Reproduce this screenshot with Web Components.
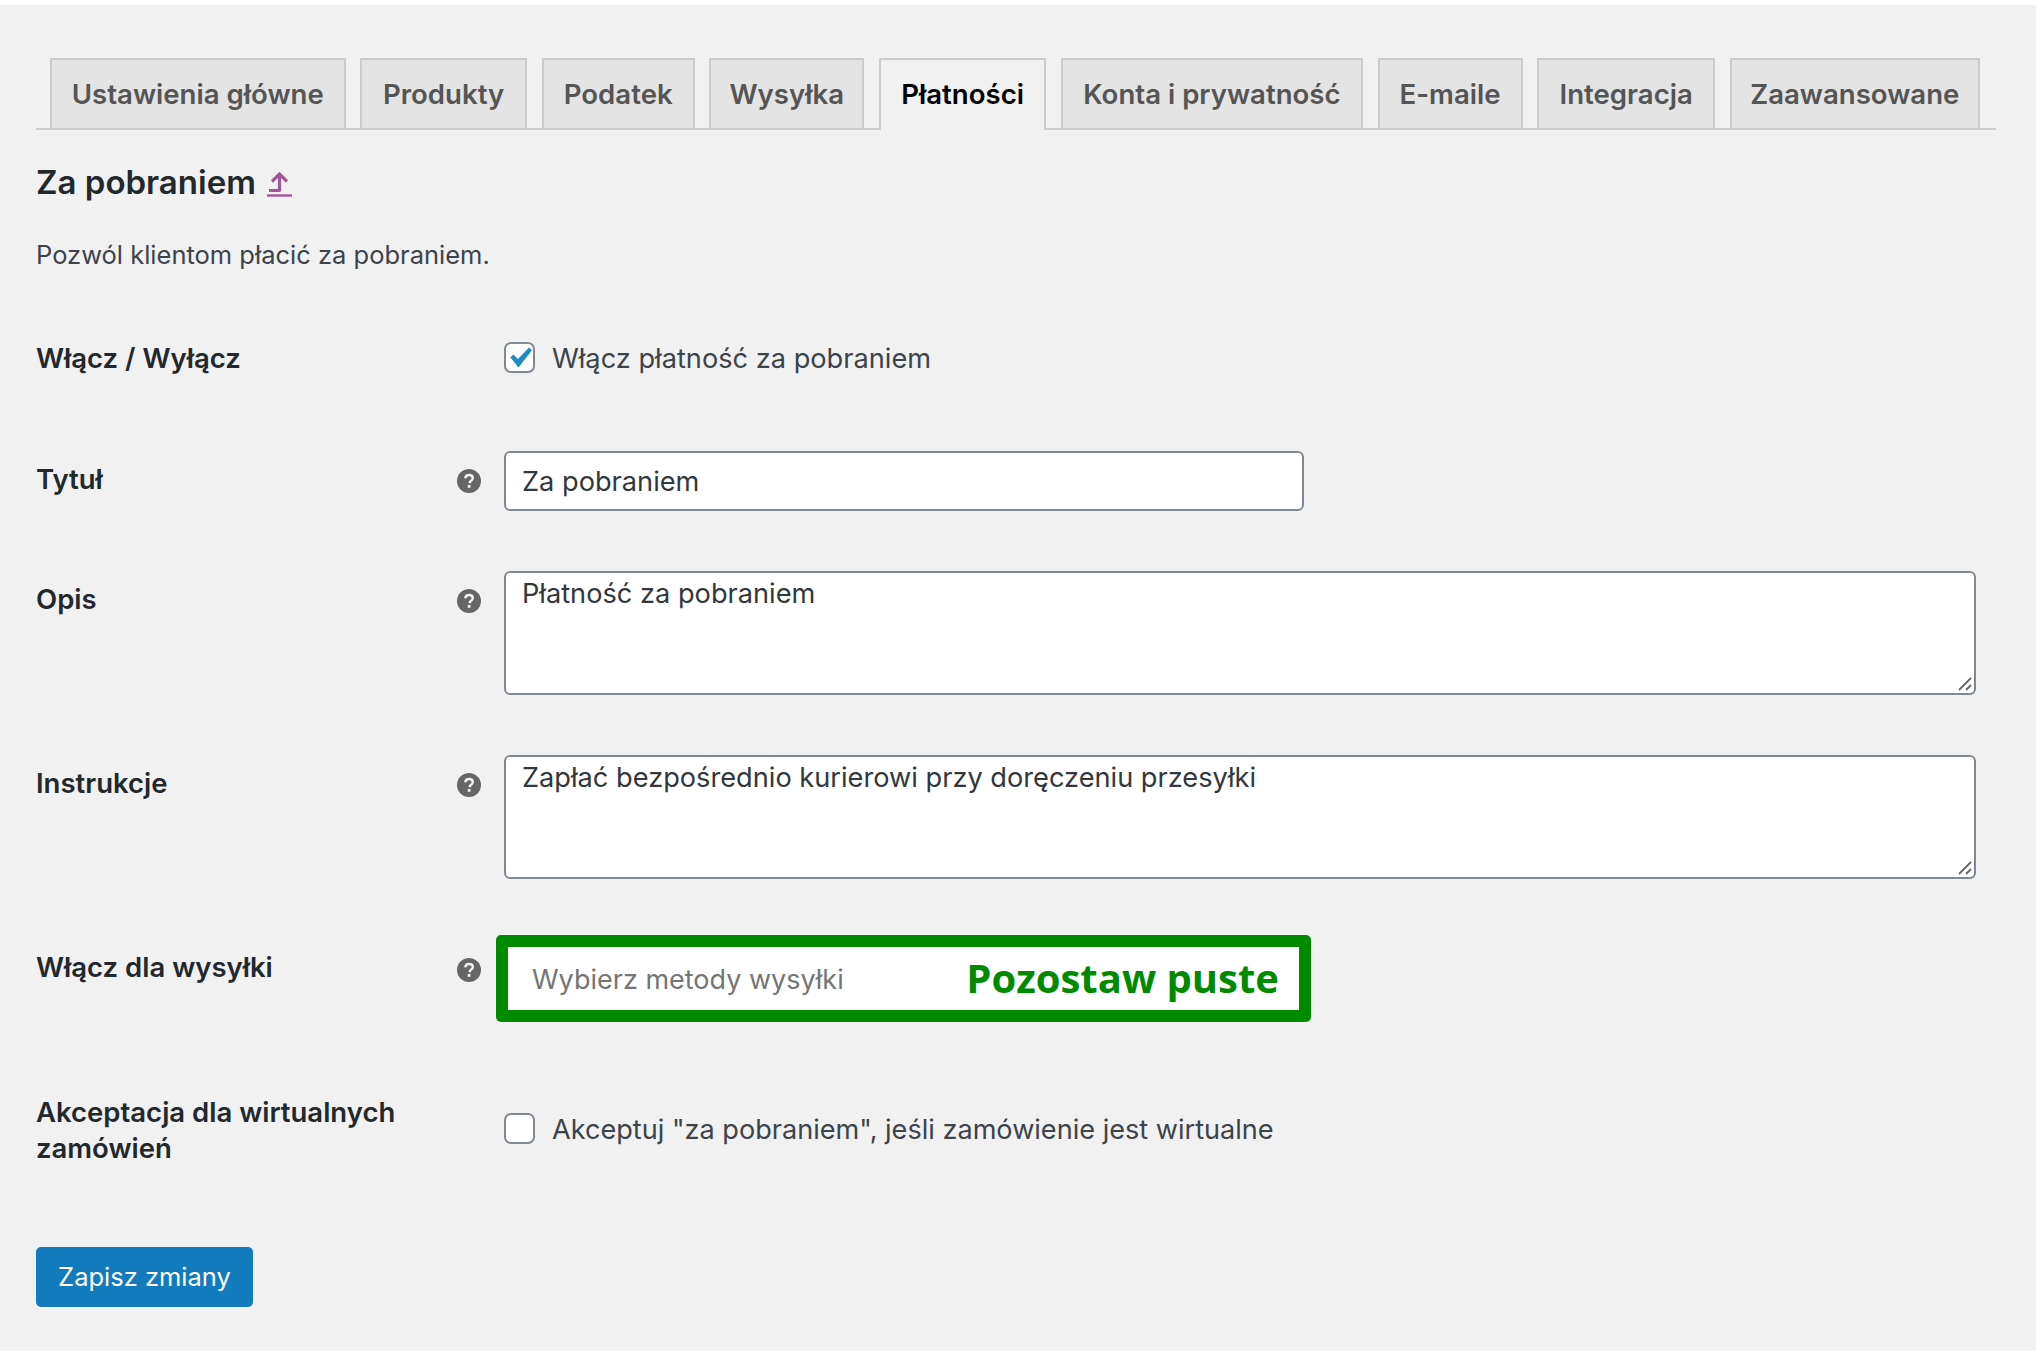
<!DOCTYPE html>
<html lang="pl">
<head>
<meta charset="utf-8">
<title>Za pobraniem</title>
<style>
  html, body { margin: 0; background: #fff; }
  body { height: 1351px; overflow: hidden; font-family: Inter, "Liberation Sans", sans-serif; }
</style>
</head>
<body>
<wc-page>
  <wc-tabs>
    <wc-tab style="width:295.5px">Ustawienia główne</wc-tab>
    <wc-tab style="width:167px">Produkty</wc-tab>
    <wc-tab style="width:153px">Podatek</wc-tab>
    <wc-tab style="width:155px">Wysyłka</wc-tab>
    <wc-tab style="width:167.5px" active>Płatności</wc-tab>
    <wc-tab style="width:302px">Konta i prywatność</wc-tab>
    <wc-tab style="width:145px">E-maile</wc-tab>
    <wc-tab style="width:178px">Integracja</wc-tab>
    <wc-tab style="width:250px">Zaawansowane</wc-tab>
  </wc-tabs>

  <wc-heading>Za pobraniem</wc-heading>
  <wc-desc>Pozwól klientom płacić za pobraniem.</wc-desc>

  <wc-row label="Włącz / Wyłącz" style="--top:68px;--label-top:0px">
    <wc-check checked>Włącz płatność za pobraniem</wc-check>
  </wc-row>
  <wc-row label="Tytuł" help style="--top:74px;--label-top:11px">
    <wc-field width="800px" height="60px">Za pobraniem</wc-field>
  </wc-row>
  <wc-row label="Opis" help style="--top:60px;--label-top:11px">
    <wc-field multiline height="124px">Płatność za pobraniem</wc-field>
  </wc-row>
  <wc-row label="Instrukcje" help style="--top:60px;--label-top:11px">
    <wc-field multiline height="124px">Zapłać bezpośrednio kurierowi przy doręczeniu przesyłki</wc-field>
  </wc-row>
  <wc-row label="Włącz dla wysyłki" help style="--top:56px;--label-top:15px;--help-top:24px">
    <wc-shipping placeholder="Wybierz metody wysyłki">Pozostaw puste</wc-shipping>
  </wc-row>
  <wc-row label="Akceptacja dla wirtualnych zamówień" style="--top:73px;--label-top:0px">
    <wc-check style="margin-top:17px;font-size:27.100px">Akceptuj "za pobraniem", jeśli zamówienie jest wirtualne</wc-check>
  </wc-row>

  <wc-button>Zapisz zmiany</wc-button>
</wc-page>

<script>
class WcElement extends HTMLElement {
  render(html) {
    this.attachShadow({ mode: 'open' }).innerHTML = html;
  }
}

class WcPage extends WcElement {
  connectedCallback() {
    this.render(`
      <style>
        :host {
          display: block;
          box-sizing: border-box;
          height: 1346px;
          margin-top: 5px;
          padding: 53px 40px 0 36px;
          background: #f1f1f1;
          color: #3c434a;
          font: 400 27.2px/36px Inter, "Liberation Sans", sans-serif;
        }
      </style>
      <slot></slot>
    `);
  }
}

class WcTabs extends WcElement {
  connectedCallback() {
    this.render(`
      <style>
        :host {
          display: flex;
          gap: 14.6px;
          height: 70px;
          padding-left: 14px;
          border-bottom: 2px solid #ccc;
        }
      </style>
      <slot></slot>
    `);
  }
}

class WcTab extends WcElement {
  connectedCallback() {
    this.render(`
      <style>
        :host {
          display: flex;
          align-items: center;
          justify-content: center;
          box-sizing: border-box;
          height: 70px;
          border: 2px solid #ccc;
          border-bottom: 0;
          background: #e4e4e4;
          color: #555;
          font-size: 27.6px;
          font-weight: 600;
          white-space: nowrap;
        }
        :host([active]) {
          height: 72px;
          padding-bottom: 2px;
          background: #f1f1f1;
          color: #000;
        }
      </style>
      <slot></slot>
    `);
  }
}

class WcHeading extends WcElement {
  connectedCallback() {
    this.render(`
      <style>
        :host {
          display: flex;
          align-items: center;
          gap: 11px;
          margin-top: 30px;
          height: 44px;
          color: #23282d;
          font-size: 33px;
          font-weight: 600;
        }
        a { display: flex; margin-top: 3px; }
        svg { display: block; }
      </style>
      <slot></slot>
      <a aria-label="Wróć">
        <svg width="25" height="26" viewBox="0 0 25 26" fill="none" stroke="#a0589a" stroke-width="3.200">
          <path d="M2 19.500h11.500M12.500 20V3"/>
          <path d="M5 10.500 12.500 3l7.500 7.500"/>
          <path d="M0 24.500h25" stroke-width="2.400"/>
        </svg>
      </a>
    `);
  }
}

class WcDesc extends WcElement {
  connectedCallback() {
    this.render(`
      <style>
        :host { display: block; margin-top: 33px; font-size: 25.500px; }
      </style>
      <slot></slot>
    `);
  }
}

class WcRow extends WcElement {
  connectedCallback() {
    const label = this.getAttribute('label');
    const help = this.hasAttribute('help') ? '<wc-help></wc-help>' : '';
    this.render(`
      <style>
        :host {
          display: grid;
          grid-template-columns: 468px 1fr;
          margin-top: var(--top, 60px);
        }
        .label {
          position: relative;
          top: -1px;
          box-sizing: border-box;
          padding-top: var(--label-top, 0);
          padding-right: 60px;
          color: #23282d;
          font-size: 27.500px;
          font-weight: 600;
        }
        wc-help { position: absolute; right: 23px; top: var(--help-top, 19px); }
      </style>
      <div class="label">${label}${help}</div>
      <div><slot></slot></div>
    `);
  }
}

class WcHelp extends WcElement {
  connectedCallback() {
    this.render(`
      <style>
        :host { display: block; width: 24px; height: 24px; }
        svg { display: block; }
      </style>
      <svg width="24" height="24" viewBox="0 0 24 24">
        <circle cx="12" cy="12" r="12" fill="#666"/>
        <path d="M8.300 9.300c.2-2.200 1.700-3.300 3.800-3.300 2.200 0 3.700 1.200 3.700 3 0 1.400-.8 2.100-1.800 2.800-.8.600-1.200 1-1.200 2v.5" fill="none" stroke="#f1f1f1" stroke-width="2.400"/>
        <rect x="10.700" y="16" width="2.800" height="2.800" fill="#f1f1f1"/>
      </svg>
    `);
  }
}

class WcCheck extends WcElement {
  connectedCallback() {
    const tick = this.hasAttribute('checked')
      ? '<svg width="27" height="27" viewBox="0 0 27 27"><path d="M4.400 13.500l3-3 4.600 4.600L23 3.600l3 2.700L12.500 23.600z" fill="#1e8cbe"/></svg>'
      : '';
    this.render(`
      <style>
        :host { display: flex; align-items: center; gap: 17px; height: 32px; }
        .box {
          display: flex;
          box-sizing: border-box;
          width: 31px;
          height: 31px;
          flex: none;
          border: 2px solid #7e8993;
          border-radius: 7px;
          background: #fff;
        }
        .text { padding-top: 4px; }
      </style>
      <div class="box">${tick}</div>
      <div class="text"><slot></slot></div>
    `);
  }
}

class WcField extends WcElement {
  connectedCallback() {
    const multiline = this.hasAttribute('multiline');
    const grip = multiline
      ? '<svg class="grip" width="16" height="16" viewBox="0 0 16 16" fill="none" stroke="#666" stroke-width="1.800"><path d="M2 14 14 2M9 14l5-5"/></svg>'
      : '';
    this.render(`
      <style>
        :host {
          display: block;
          position: relative;
          box-sizing: border-box;
          width: ${this.getAttribute('width') || '1472px'};
          height: ${this.getAttribute('height')};
          padding: ${multiline ? '3px' : '11px'} 16px 0;
          border: 2px solid #7e8993;
          border-radius: 6px;
          background: #fff;
          color: #32373c;
        }
        .grip { position: absolute; right: 1px; bottom: 1px; }
      </style>
      <slot></slot>${grip}
    `);
  }
}

class WcShipping extends WcElement {
  connectedCallback() {
    this.render(`
      <style>
        :host {
          display: flex;
          align-items: center;
          justify-content: space-between;
          box-sizing: border-box;
          width: 815px;
          height: 87px;
          margin-left: -8px;
          padding: 0 20px 0 24px;
          border: 12px solid #008a00;
          border-radius: 5px;
          background: #fff;
        }
        .placeholder { padding-top: 3px; color: #757575; font-size: 27px; }
        .hint {
          color: #008a00;
          font: 700 40px/1 "Open Sans", "Liberation Sans", sans-serif;
          padding-bottom: 2px;
        }
      </style>
      <div class="placeholder">${this.getAttribute('placeholder')}</div>
      <div class="hint"><slot></slot></div>
    `);
  }
}

class WcButton extends WcElement {
  connectedCallback() {
    this.render(`
      <style>
        :host {
          display: flex;
          align-items: center;
          justify-content: center;
          box-sizing: border-box;
          width: 217px;
          height: 60px;
          margin-top: 80px;
          border-radius: 5px;
          background: #127bbd;
          color: #fff;
          font-size: 25.500px;
        }
      </style>
      <slot></slot>
    `);
  }
}

customElements.define('wc-page', WcPage);
customElements.define('wc-tabs', WcTabs);
customElements.define('wc-tab', WcTab);
customElements.define('wc-heading', WcHeading);
customElements.define('wc-desc', WcDesc);
customElements.define('wc-row', WcRow);
customElements.define('wc-help', WcHelp);
customElements.define('wc-check', WcCheck);
customElements.define('wc-field', WcField);
customElements.define('wc-shipping', WcShipping);
customElements.define('wc-button', WcButton);
</script>
</body>
</html>
